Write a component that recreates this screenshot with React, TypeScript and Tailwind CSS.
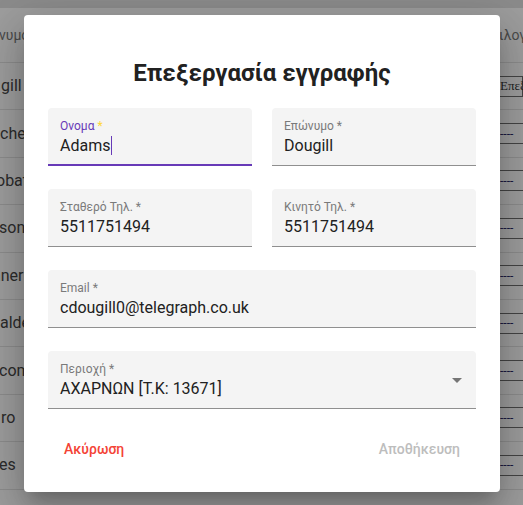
import React from 'react';

const rows = [
  { left: 'gill', ml: 'ml-[1px]', right: 'Επεξεργασία' },
  { left: 'chell', ml: 'ml-0', right: '----' },
  { left: 'obat', ml: '-ml-[4px]', right: '----' },
  { left: 'son', ml: '-ml-[1px]', right: '----' },
  { left: 'anerr', ml: '-ml-[8px]', right: '----' },
  { left: 'alde', ml: 'ml-0', right: '----' },
  { left: 'com', ml: '-ml-[1px]', right: '----' },
  { left: 'ro', ml: 'ml-[1px]', right: '----' },
  { left: 'es', ml: '-ml-[1px]', right: '----' },
];

const Field = ({
  label,
  value,
  focused = false,
  select = false,
}: {
  label: string;
  value: string;
  focused?: boolean;
  select?: boolean;
}) => {
  return (
    <div
      className={`relative h-[58px] rounded-t bg-[#f4f4f4] px-3 ${
        focused ? 'border-b-2 border-[#673ab7]' : 'border-b border-[#8f8f8f]'
      }`}
    >
      <div
        className={`pt-[11px] text-[12px] leading-[14px] ${
          focused ? 'text-[#673ab7]' : 'text-[#7a7a7a]'
        }`}
      >
        {label}
        <span className={focused ? 'text-[#fdd835]' : ''}> *</span>
      </div>
      <div className="mt-[3px] flex items-center text-[16px] leading-[19px] text-[#212121]">
        {value}
        {focused && <span className="ml-px inline-block h-[19px] w-px bg-[#673ab7]" />}
      </div>
      {select && (
        <svg
          className="absolute right-[7px] top-[17px] h-6 w-6 fill-[#757575]"
          viewBox="0 0 24 24"
        >
          <path d="M7 10l5 5 5-5z" />
        </svg>
      )}
    </div>
  );
};

const App = () => {
  return (
    <div className="relative h-[505px] w-[523px] overflow-hidden bg-[#9d9d9d] font-['Roboto',sans-serif]">
      {/* background table, dimmed by the dialog */}
      <div className="h-2 bg-[#8b8b8b]" />
      <div className="flex h-[55px] items-center border-b border-[#8c8c8c] text-[14px] text-[#4a4a4a]">
        <div className="-ml-[1px] flex-1">νυμο</div>
        <div className="w-[26px] shrink-0 overflow-hidden whitespace-nowrap pl-[2px]">ιλογές</div>
      </div>
      {rows.map((r, i) => (
        <div
          key={i}
          className="flex h-[47.4px] items-center border-b border-[#8c8c8c] text-[16px] text-[#2b2b2b]"
        >
          <div className={`flex-1 whitespace-nowrap ${r.ml}`}>{r.left}</div>
          <div className="w-[33px] shrink-0 overflow-hidden">
            {i === 0 ? (
              <div className="ml-[7px] flex h-[21px] items-center whitespace-nowrap border border-[#444] pl-[2px] font-['Liberation_Serif',serif] text-[13px] text-[#222]">
                {r.right}
              </div>
            ) : (
              <div className="flex h-[21px] items-center border-y border-[#444] pl-[10px] text-[12px] leading-none text-[#1a1a40]">
                {r.right}
              </div>
            )}
          </div>
        </div>
      ))}

      {/* dialog */}
      <div className="absolute left-[24px] top-[15px] h-[477px] w-[476px] rounded bg-white px-6 shadow-[0px_11px_15px_-7px_rgba(0,0,0,0.2),0px_24px_38px_3px_rgba(0,0,0,0.14),0px_9px_46px_8px_rgba(0,0,0,0.12)]">
        <h2 className="mt-[42px] text-center text-[24px] font-bold leading-8 text-[#212121]">
          Επεξεργασία εγγραφής
        </h2>
        <div className="mt-[19px] grid grid-cols-2 gap-x-5 gap-y-[23px]">
          <Field label="Ονομα" value="Adams" focused />
          <Field label="Επώνυμο" value="Dougill" />
          <Field label="Σταθερό Τηλ." value="5511751494" />
          <Field label="Κινητό Τηλ." value="5511751494" />
          <div className="col-span-2">
            <Field label="Email" value="cdougill0@telegraph.co.uk" />
          </div>
          <div className="col-span-2">
            <Field label="Περιοχή" value="ΑΧΑΡΝΩΝ [Τ.Κ: 13671]" select />
          </div>
        </div>
        <div className="mt-[22px] flex items-center justify-between">
          <button className="px-4 py-1.5 text-[14px] font-medium leading-6 text-[#f44336]">
            Ακύρωση
          </button>
          <button className="px-4 py-1.5 text-[14px] font-medium leading-6 text-[#bdbdbd]" disabled>
            Αποθήκευση
          </button>
        </div>
      </div>
    </div>
  );
};

export default App;
